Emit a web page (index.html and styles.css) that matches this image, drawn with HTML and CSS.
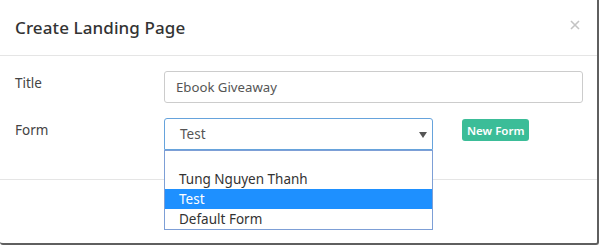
FILE: index.html
```html
<!DOCTYPE html>
<html lang="en">
<head>
    <meta charset="UTF-8">
    <title>Create Landing Page</title>
    <link rel="stylesheet" href="styles.css">
</head>
<body>
    <div class="modal">
        <div class="modal-header">
            <h4 class="modal-title">Create Landing Page</h4>
            <span class="close">
                <svg width="10" height="10" viewBox="0 0 10 10">
                    <path d="M1 1 L9 9 M9 1 L1 9" stroke="#c4c4c4" stroke-width="1.6" />
                </svg>
            </span>
        </div>

        <div class="modal-body">
            <div class="form-row">
                <label class="form-label">Title</label>
                <input class="form-input" type="text" value="Ebook Giveaway">
            </div>

            <div class="form-row">
                <label class="form-label">Form</label>
                <div class="select-wrap">
                    <div class="select">
                        <span>Test</span>
                        <svg class="caret" width="8" height="6" viewBox="0 0 8 6">
                            <path d="M0 0 L8 0 L4 6 Z" fill="#555" />
                        </svg>
                    </div>
                    <ul class="dropdown">
                        <li>&nbsp;</li>
                        <li>Tung Nguyen Thanh</li>
                        <li class="selected">Test</li>
                        <li>Default Form</li>
                    </ul>
                </div>
                <button class="btn-new">New Form</button>
            </div>
        </div>

        <div class="modal-footer"></div>
    </div>
</body>
</html>
```

FILE: styles.css
```css
body {
    margin: 0;
    font-family: "Noto Sans", "Open Sans", sans-serif;
    background: #fff;
}

.modal {
    width: 597px;
    height: 243px;
    border-right: 2px solid #5f5f5f;
    border-bottom: 2px solid #5f5f5f;
    border-bottom-right-radius: 3px;
    border-bottom-left-radius: 3px;
    background: #fff;
    overflow: hidden;
}

.modal-header {
    display: flex;
    align-items: center;
    justify-content: space-between;
    height: 56px;
    padding: 0 17px 0 15px;
    border-bottom: 1px solid #e5e5e5;
    box-sizing: border-box;
}

.modal-title {
    margin: 0;
    font-size: 17px;
    font-weight: 500;
    color: #333;
    letter-spacing: 0.1px;
}

.close {
    display: flex;
    margin-top: -6px;
}

.modal-body {
    padding: 15px 14px 29px 15px;
    border-bottom: 1px solid #e5e5e5;
}

.form-row {
    display: flex;
    align-items: flex-start;
}

.form-row + .form-row {
    margin-top: 15px;
}

.form-label {
    width: 149px;
    padding-top: 2px;
    font-size: 13.5px;
    line-height: 20px;
    color: #444;
}

.form-input {
    flex: 1;
    height: 32px;
    box-sizing: border-box;
    margin: 0;
    padding: 0 11px;
    border: 1px solid #ccc;
    border-radius: 3px;
    font-family: inherit;
    font-size: 13.2px;
    color: #555;
}

.select-wrap {
    position: relative;
    width: 269px;
}

.select {
    display: flex;
    align-items: center;
    justify-content: space-between;
    height: 32px;
    box-sizing: border-box;
    padding: 0 5px 0 15px;
    border: 1px solid #66a3dc;
    border-radius: 3px 3px 0 0;
    font-size: 13.5px;
    color: #555;
}

.caret {
    margin-top: 1px;
}

.dropdown {
    position: absolute;
    top: 32px;
    left: 0;
    width: 269px;
    box-sizing: border-box;
    margin: 0;
    padding: 0;
    list-style: none;
    background: #fff;
    border: 1px solid #7d9fd6;
}

.dropdown li {
    height: 20px;
    padding-left: 14px;
    font-size: 13.5px;
    line-height: 21px;
    color: #333;
}

.dropdown li:first-child {
    height: 18px;
}

.dropdown li.selected {
    background: #1e90ff;
    color: #fff;
}

.btn-new {
    margin: 1px 0 0 29px;
    height: 22px;
    padding: 0 5px;
    border: none;
    border-radius: 3px;
    background: #3bbd98;
    color: #fff;
    font-family: inherit;
    font-size: 11.5px;
    font-weight: 600;
}

.modal-footer {
    height: 62px;
}
```
